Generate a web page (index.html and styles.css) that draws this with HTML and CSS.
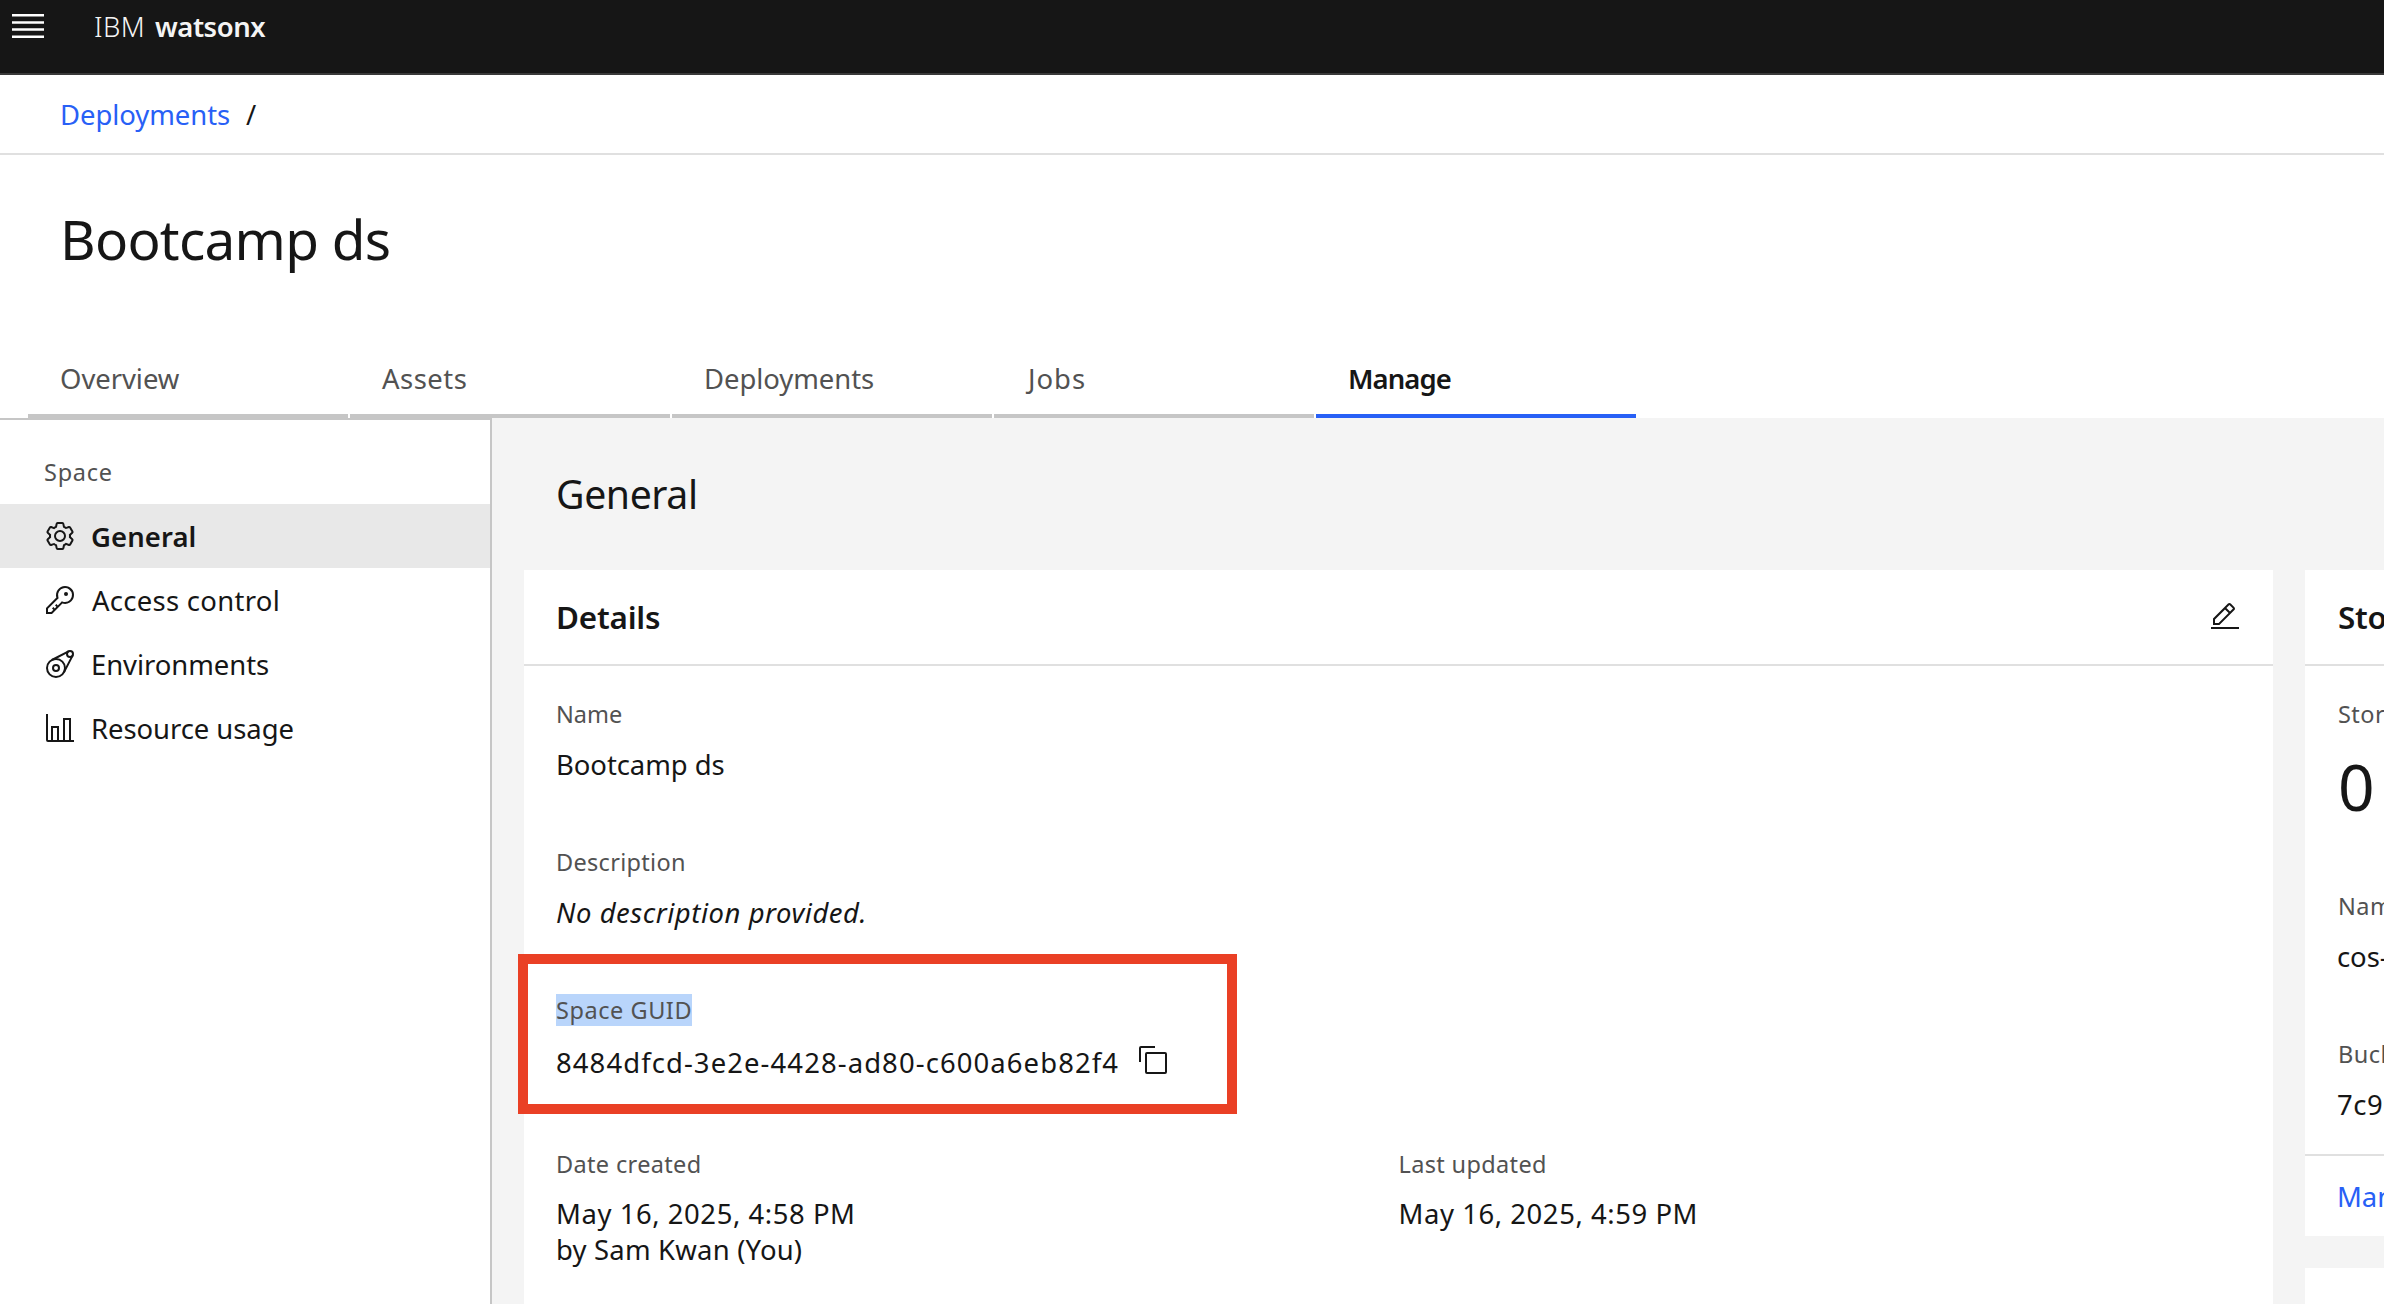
FILE: index.html
```
<!DOCTYPE html>
<html lang="en">
<head>
<meta charset="utf-8">
<title>Bootcamp ds - IBM watsonx</title>
<link rel="stylesheet" href="styles.css">
</head>
<body>
<header class="topbar">
  <svg class="menu" width="32" height="24" viewBox="0 0 32 24" fill="#fff"><path d="M0 0h32v2.4H0zM0 7.3h32v2.4H0zM0 14.3h32v2.4H0zM0 21.6h32V24H0z"/></svg>
  <div class="brand"><span class="brand-ibm">IBM</span><span class="brand-name">watsonx</span></div>
</header>
<nav class="breadcrumb"><a class="link">Deployments</a><span class="slash">/</span></nav>
<div class="page-head">
  <h1 class="title">Bootcamp ds</h1>
  <div class="tabs">
    <div class="tab">Overview</div>
    <div class="tab tab-assets">Assets</div>
    <div class="tab">Deployments</div>
    <div class="tab tab-jobs">Jobs</div>
    <div class="tab tab-active">Manage</div>
  </div>
</div>
<div class="layout">
  <aside class="side">
    <div class="side-label">Space</div>
    <div class="item item-active">
      <svg class="icon" viewBox="0 0 32 32"><path d="M27,16.76c0-.25,0-.5,0-.76s0-.51,0-.77l1.92-1.68A2,2,0,0,0,29.3,11L26.94,7a2,2,0,0,0-1.73-1,2,2,0,0,0-.64.1l-2.43.82a11.35,11.35,0,0,0-1.31-.75l-.51-2.52a2,2,0,0,0-2-1.61H13.64a2,2,0,0,0-2,1.61l-.51,2.52a11.48,11.48,0,0,0-1.32.75L7.43,6.06A2,2,0,0,0,6.79,6,2,2,0,0,0,5.06,7L2.7,11a2,2,0,0,0,.41,2.51L5,15.24c0,.25,0,.5,0,.76s0,.51,0,.77L3.11,18.45A2,2,0,0,0,2.7,21L5.06,25a2,2,0,0,0,1.73,1,2,2,0,0,0,.64-.1l2.43-.82a11.35,11.35,0,0,0,1.31.75l.51,2.52a2,2,0,0,0,2,1.61h4.72a2,2,0,0,0,2-1.61l.51-2.52a11.48,11.48,0,0,0,1.32-.75l2.42.82a2,2,0,0,0,.64.1,2,2,0,0,0,1.73-1L29.3,21a2,2,0,0,0-.41-2.51ZM25.21,24l-3.43-1.16a8.86,8.86,0,0,1-2.71,1.57L18.36,28H13.64l-.71-3.55a9.36,9.36,0,0,1-2.7-1.57L6.79,24,4.43,20l2.72-2.4a8.9,8.9,0,0,1,0-3.13L4.43,12,6.79,8l3.43,1.16a8.86,8.86,0,0,1,2.71-1.57L13.64,4h4.72l.71,3.55a9.36,9.36,0,0,1,2.7,1.57L25.21,8,27.57,12l-2.72,2.4a8.9,8.9,0,0,1,0,3.13L27.57,20Z"/><path d="M16,22a6,6,0,1,1,6-6A5.94,5.94,0,0,1,16,22Zm0-10a3.91,3.91,0,0,0-4,4,3.91,3.91,0,0,0,4,4,3.91,3.91,0,0,0,4-4A3.91,3.91,0,0,0,16,12Z"/></svg>
      <span class="item-text">General</span>
    </div>
    <div class="item item-access">
      <svg class="icon" viewBox="0 0 32 32"><path d="M21,2a8.9977,8.9977,0,0,0-8.6119,11.6118L2,24v6H8L18.3881,19.6118A9,9,0,1,0,21,2Zm0,16a7.0125,7.0125,0,0,1-2.0322-.3022L17.821,17.35l-.8472.8472-3.1811,3.1812L12.4141,20,11,21.4141l1.3787,1.3786-1.5859,1.586L9.4141,23,8,24.4141l1.3787,1.3786L7.1716,28H4V24.8284l9.8023-9.8023.8472-.8474-.3473-1.1467A7,7,0,1,1,21,18Z"/><circle cx="22" cy="10" r="2"/></svg>
      <span class="item-text">Access control</span>
    </div>
    <div class="item">
      <svg class="icon icon-line" viewBox="0 0 32 32"><circle cx="12" cy="20" r="9"/><circle cx="12" cy="20" r="3"/><circle cx="26" cy="6" r="3"/><path d="M7.9 12 24.6 3.3M20 24.1 28.7 7.4"/></svg>
      <span class="item-text">Environments</span>
    </div>
    <div class="item">
      <svg class="icon" viewBox="0 0 32 32"><path d="M27,28V6H19V28H15V14H7V28H4V2H2V28a2,2,0,0,0,2,2H30V28ZM13,28H9V16h4Zm12,0H21V8h4Z"/></svg>
      <span class="item-text">Resource usage</span>
    </div>
  </aside>
  <main class="main">
    <h2 class="heading">General</h2>
    <div class="columns">
      <section class="card card-details">
        <div class="card-head">
          <h3 class="card-title">Details</h3>
          <svg class="icon" viewBox="0 0 32 32"><path d="M2 26H30V28H2zM25.4,9c0.8-0.8,0.8-2,0-2.8l-3.6-3.6c-0.8-0.8-2-0.8-2.8,0l-15,15V24h6.4L25.4,9zM20.4,4L24,7.6l-3,3L17.4,7L20.4,4zM6,22v-3.6l10-10l3.6,3.6l-10,10H6z"/></svg>
        </div>
        <div class="card-body">
          <div class="field"><div class="label label-name">Name</div><div class="value value-name">Bootcamp ds</div></div>
          <div class="field"><div class="label label-desc">Description</div><div class="value value-empty">No description provided.</div></div>
          <div class="field field-guid">
            <div class="label label-guid"><span class="selected">Space GUID</span></div>
            <div class="guid"><span class="value value-guid">8484dfcd-3e2e-4428-ad80-c600a6eb82f4</span>
              <svg class="icon icon-copy" viewBox="0 0 32 32"><path d="M28,10V28H10V10H28m0-2H10a2,2,0,0,0-2,2V28a2,2,0,0,0,2,2H28a2,2,0,0,0,2-2V10a2,2,0,0,0-2-2Z"/><path d="M4,18H2V4A2,2,0,0,1,4,2H18V4H4Z"/></svg></div>
            <div class="callout"></div>
          </div>
          <div class="dates">
            <div class="field"><div class="label label-date">Date created</div><div class="value value-date">May 16, 2025, 4:58 PM</div><div class="value value-by">by Sam Kwan (You)</div></div>
            <div class="field"><div class="label label-date">Last updated</div><div class="value value-date">May 16, 2025, 4:59 PM</div></div>
          </div>
        </div>
      </section>
      <div class="aside-col">
        <section class="card">
          <div class="card-head"><h3 class="card-title">Storage</h3></div>
          <div class="card-body">
            <div class="field"><div class="label">Storage used</div><div class="metric">0</div></div>
            <div class="field"><div class="label">Name</div><div class="value">cos-</div></div>
            <div class="field"><div class="label">Bucket</div><div class="value value-date">7c9</div></div>
          </div>
          <div class="card-foot"><a class="link">Manage</a></div>
        </section>
        <section class="card card-next"></section>
      </div>
    </div>
  </main>
</div>
</body>
</html>
```
FILE: styles.css
```
* { box-sizing: border-box; }
body {
  margin: 0;
  width: 2384px;
  height: 1304px;
  overflow: hidden;
  display: flex;
  flex-direction: column;
  background: #fff;
  color: #161616;
  font: 27.44px/36px "Noto Sans", "Open Sans", sans-serif;
  letter-spacing: -0.05px;
}
h1, h2, h3 { margin: 0; font-weight: 400; }
.icon { width: 32px; height: 32px; flex: none; fill: #161616; }
.icon-line { fill: none; stroke: #161616; stroke-width: 2; }
.link { color: #2860f6; }

.topbar {
  flex: none;
  height: 75px;
  padding: 9px 12px;
  display: flex;
  align-items: flex-start;
  background: #161616;
  border-bottom: 2px solid #393939;
  color: #f4f4f4;
}
.menu { margin-top: 5px; }
.brand { margin-left: 50px; display: flex; gap: 10px; }
.brand-ibm { font-weight: 300; letter-spacing: 0.4px; }
.brand-name { font-weight: 600; letter-spacing: -0.45px; }

.breadcrumb {
  flex: none;
  height: 80px;
  padding: 22px 60px 0;
  display: flex;
  gap: 16px;
  border-bottom: 2px solid #e0e0e0;
}

.page-head {
  flex: none;
  height: 263px;
  padding-top: 52px;
  display: flex;
  flex-direction: column;
  justify-content: space-between;
}
.title { padding-left: 60px; font-size: 54.9px; line-height: 64px; letter-spacing: -0.75px; }
.tabs { display: flex; gap: 2px; padding-left: 28px; }
.tab {
  width: 320px;
  height: 58px;
  padding: 1px 0 0 32px;
  border-bottom: 4px solid #c6c6c6;
  color: #525252;
}
.tab-assets { letter-spacing: 0.5px; }
.tab-jobs { letter-spacing: 1px; padding-left: 34px; }
.tab-active { border-color: #2860f6; color: #161616; font-weight: 600; letter-spacing: -0.9px; }

.layout { flex: 1; display: flex; min-height: 0; }
.side {
  flex: none;
  width: 492px;
  padding-top: 36px;
  border-top: 2px solid #c6c6c6;
  border-right: 2px solid #c6c6c6;
}
.side-label {
  padding-left: 44px;
  margin-bottom: 16px;
  font-size: 23.5px;
  line-height: 32px;
  color: #525252;
  letter-spacing: 0.75px;
}
.item { height: 64px; padding-left: 44px; display: flex; align-items: center; gap: 15px; }
.item-text { padding-top: 2px; }
.item-active { background: #e8e8e8; font-weight: 600; letter-spacing: 0.1px; }
.item-access { gap: 16px; letter-spacing: 0.3px; }

.main { flex: 1; min-width: 0; padding: 51px 0 0 32px; background: #f4f4f4; overflow: hidden; }
.heading { padding-left: 32px; font-size: 39.2px; line-height: 50px; letter-spacing: -0.4px; }
.columns { margin-top: 51px; display: flex; gap: 32px; }
.card { background: #fff; }
.card-details { flex: none; width: 1749px; height: 760px; }
.card-head {
  height: 96px;
  padding: 0 32px;
  display: flex;
  align-items: center;
  justify-content: space-between;
  border-bottom: 2px solid #e0e0e0;
}
.card-title { font-size: 31.4px; line-height: 40px; font-weight: 600; letter-spacing: -0.2px; }
.card-body { padding: 32px 32px 31px; display: flex; flex-direction: column; gap: 63px; }
.label {
  margin-bottom: 17px;
  font-size: 23.5px;
  line-height: 32px;
  color: #525252;
  letter-spacing: 0.45px;
  white-space: nowrap;
}
.label-name { letter-spacing: 0; }
.label-desc { letter-spacing: 0.3px; }
.label-guid { margin-bottom: 19px; letter-spacing: 0.55px; }
.label-date { margin-bottom: 16px; letter-spacing: 0.35px; }
.selected { display: inline-block; background: #b9d5fb; }
.value { white-space: nowrap; }
.value-empty { font-style: italic; letter-spacing: 0.55px; }
.value-guid { letter-spacing: 1.1px; }
.value-date { letter-spacing: 0.57px; }
.value-by { letter-spacing: 0.2px; }
.field-guid { position: relative; }
.guid { display: flex; gap: 18px; height: 36px; }
.icon-copy { margin-top: -1px; }
.callout {
  position: absolute;
  left: -38px;
  top: -40px;
  width: 719px;
  height: 160px;
  border: 10px solid #ea4025;
}
.dates { margin-top: 4px; display: grid; grid-template-columns: 1fr 1fr; }

.aside-col { flex: none; width: 640px; display: flex; flex-direction: column; gap: 32px; }
.aside-col .card-title, .aside-col .label, .aside-col .metric { padding-left: 1px; }
.metric { font-size: 64px; line-height: 80px; }
.card-foot { height: 82px; padding: 23px 32px 0; border-top: 2px solid #e0e0e0; }
.card-next { height: 200px; }
```
